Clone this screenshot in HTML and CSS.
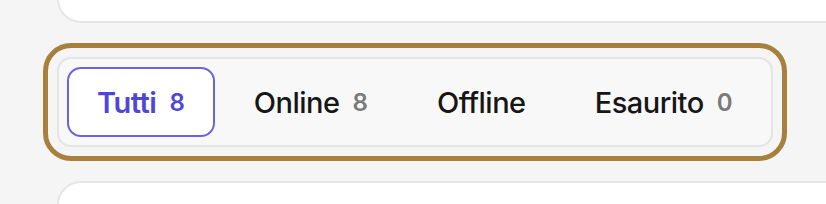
FILE: index.html
```html
<!DOCTYPE html>
<html lang="it">
<head>
<meta charset="utf-8">
<link rel="stylesheet" href="styles.css">
</head>
<body>
<main class="page">
  <section class="card card-top"></section>
  <div class="tablist" role="tablist">
    <button class="tab tab-active" role="tab">Tutti<span class="count">8</span></button>
    <button class="tab" role="tab">Online<span class="count">8</span></button>
    <button class="tab" role="tab">Offline</button>
    <button class="tab" role="tab">Esaurito<span class="count">0</span></button>
  </div>
  <section class="card card-bottom"></section>
</main>
</body>
</html>
```
FILE: styles.css
```css
html {
  overflow: hidden;
  background: #f5f5f5;
}
body {
  margin: 0;
  padding: 0;
  font-family: Inter, "Noto Sans", sans-serif;
}
.page {
  padding: 0 0 0 57px;
  display: flex;
  flex-direction: column;
  align-items: flex-start;
  gap: 34px;
  transform: translateY(-58px);
}
.card {
  align-self: stretch;
  background: #ffffff;
  border: 2px solid #e6e6e6;
  border-radius: 24px;
  margin-right: -60px;
  height: 77px;
  flex: none;
}
.tablist {
  display: inline-flex;
  align-items: center;
  gap: 9px;
  padding: 8px;
  background: #f8f8f8;
  border: 2px solid #e4e4e4;
  border-radius: 14px;
  outline: 5px solid #a8803e;
  outline-offset: 9px;
  flex: none;
}
.tab {
  display: flex;
  align-items: center;
  height: 70px;
  padding: 0 28px;
  border: 2px solid transparent;
  border-radius: 14px;
  background: transparent;
  font-family: inherit;
  font-size: 29px;
  font-weight: 500;
  color: #161616;
  letter-spacing: -0.5px;
  cursor: pointer;
}
.tab-active {
  background: #ffffff;
  border-color: #6b63e6;
  color: #4f46d8;
  font-weight: 600;
}
.count {
  margin-left: 13px;
  font-size: 24px;
  font-weight: 600;
  color: #7a7a7a;
  letter-spacing: 0;
}
.tab-active .count {
  color: #4f46d8;
}
```
